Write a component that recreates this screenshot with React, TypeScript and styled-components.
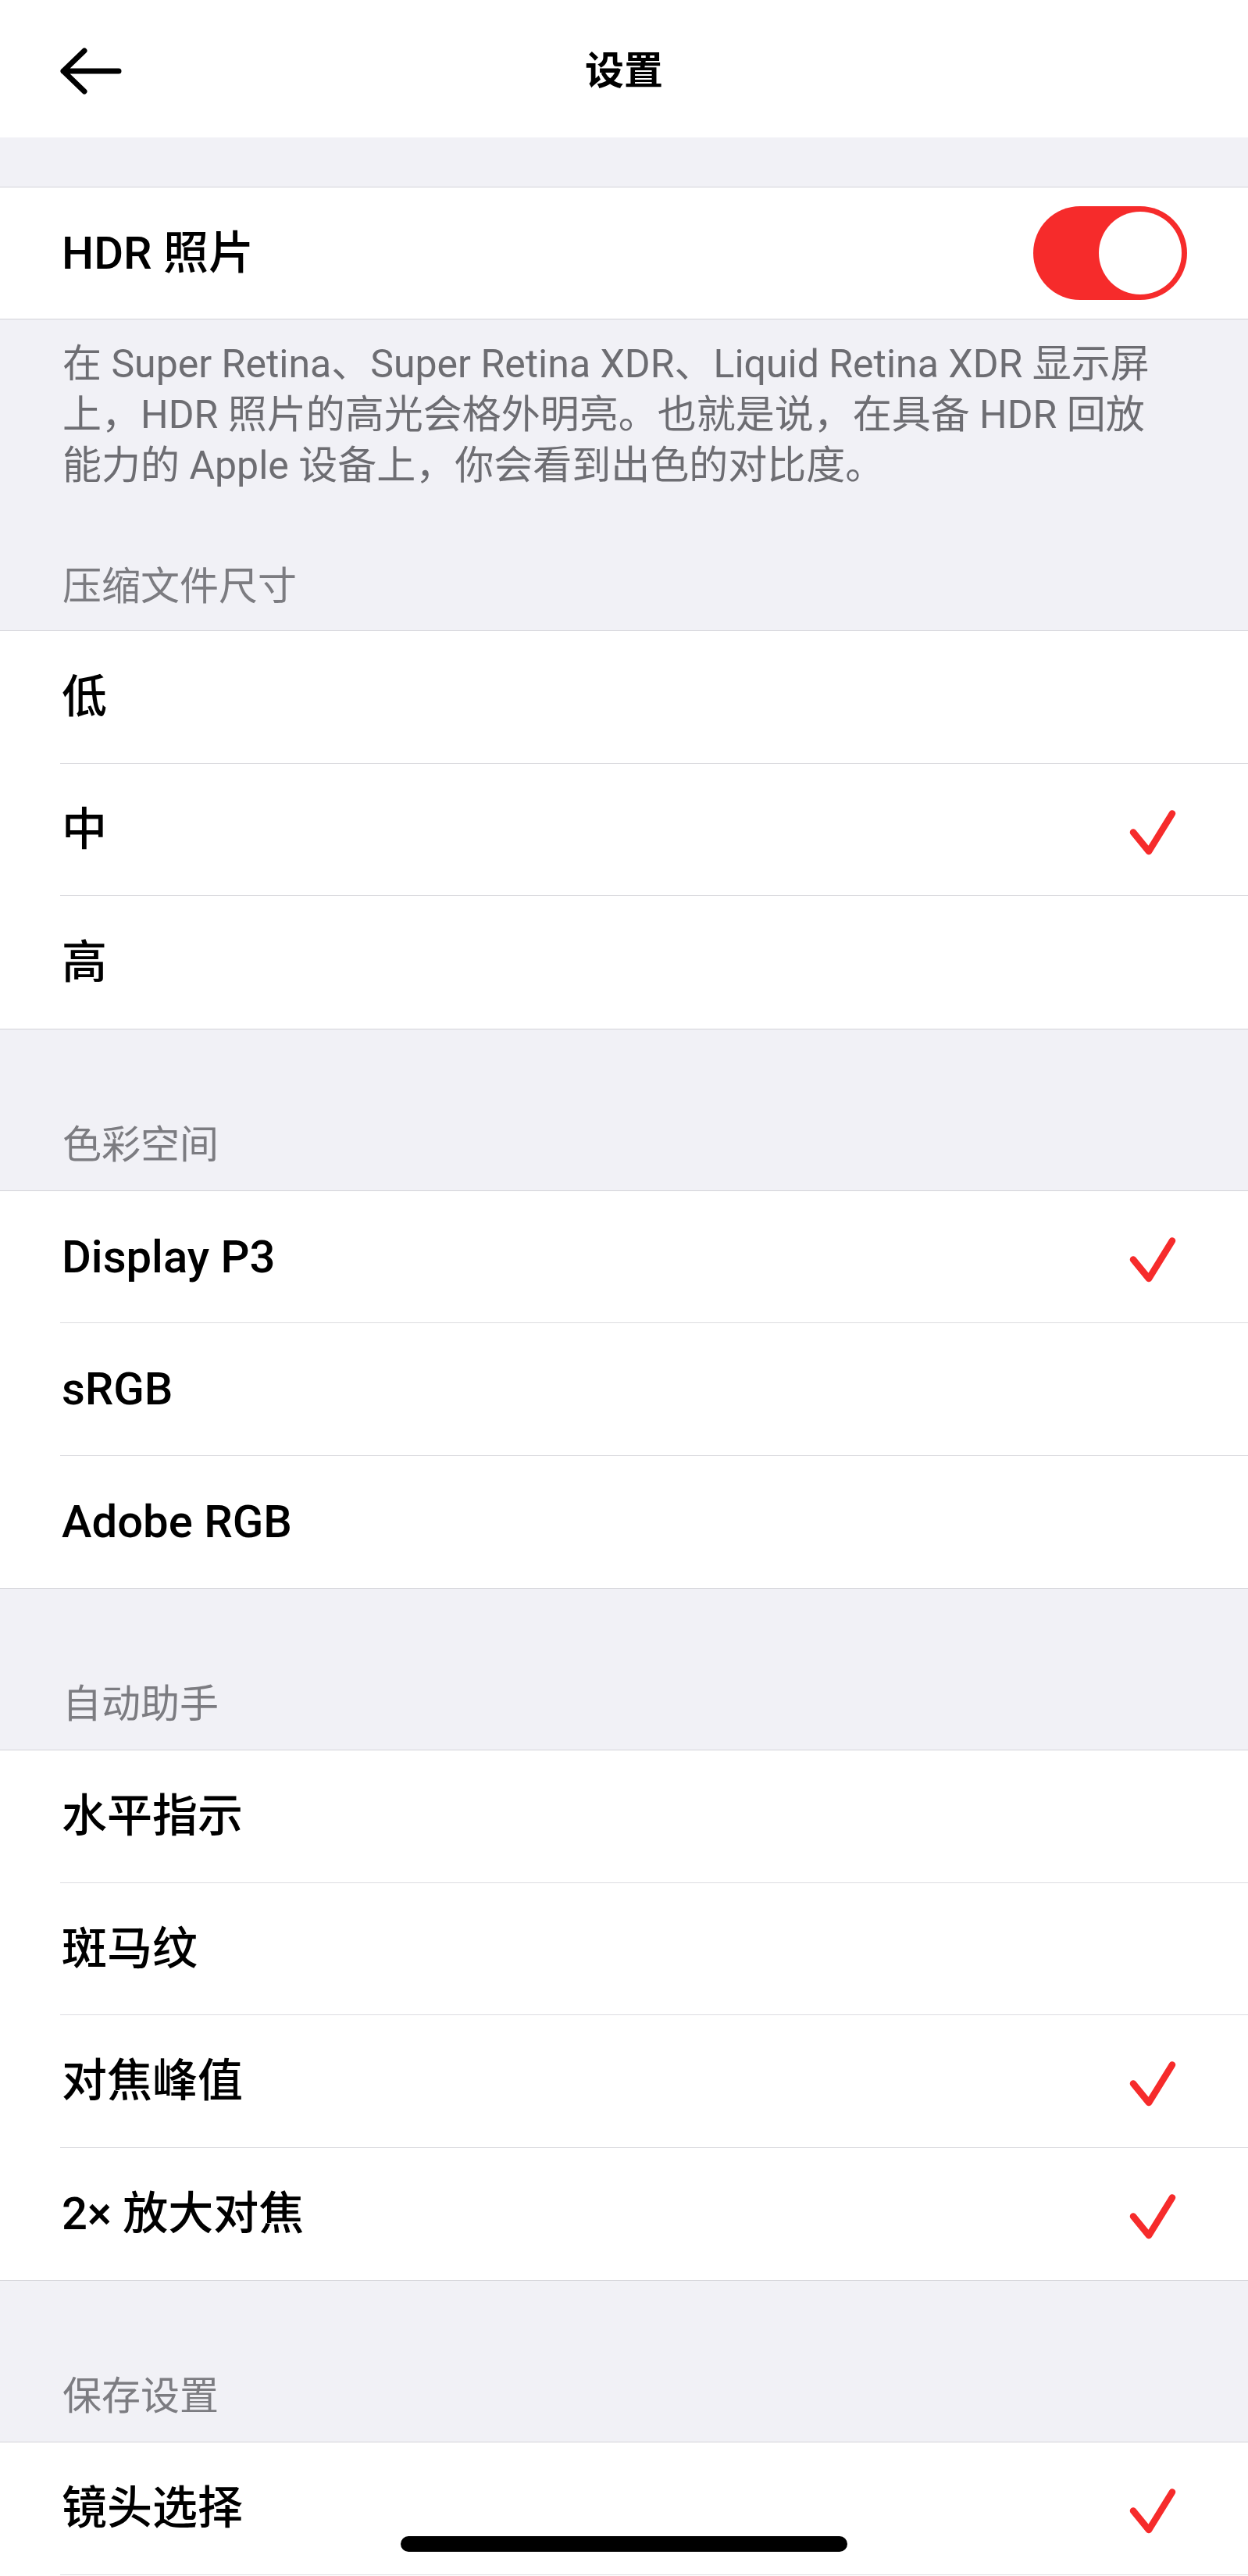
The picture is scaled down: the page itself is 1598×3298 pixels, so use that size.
import React from "react";
import styled, { createGlobalStyle } from "styled-components";

const GlobalStyle = createGlobalStyle`
  html, body {
    margin: 0;
    padding: 0;
    background: #ffffff;
  }
  body {
    font-family: Roboto, "Noto Sans CJK SC", "Noto Sans", sans-serif;
    color: #000;
    -webkit-font-smoothing: antialiased;
  }
  * { box-sizing: border-box; }
`;

const RED = "#f62b2b";
const GRAY_BG = "#f1f1f6";
const EDGE = "#d3d3d8";
const SEP = "#dcdce0";

const Page = styled.div`
  width: 1598px;
  display: flex;
  flex-direction: column;
  background: #fff;
`;

const NavBar = styled.header`
  height: 176px;
  padding: 6px 0 0 0;
  display: grid;
  grid-template-columns: 1fr auto 1fr;
  align-items: center;
  background: #fff;
`;

const BackButton = styled.button`
  justify-self: start;
  margin-left: 76px;
  padding: 0;
  border: none;
  background: transparent;
  display: flex;
  align-items: center;
  cursor: pointer;
`;

const Title = styled.h1`
  margin: 0;
  font-size: 50px;
  line-height: 60px;
  font-weight: 600;
  color: #000;
`;

const Spacer = styled.div<{ $h: number }>`
  height: ${(p) => p.$h}px;
  background: ${GRAY_BG};
`;

const Group = styled.section`
  background: #fff;
  border-top: 1px solid ${EDGE};
  border-bottom: 1px solid ${EDGE};
`;

const Row = styled.div`
  padding-left: 77px;
  &:last-child > div {
    border-bottom: none;
  }
`;

const RowInner = styled.div<{ $h?: number }>`
  height: ${(p) => p.$h ?? 169.5}px;
  padding: 0 78px 0 2px;
  display: flex;
  align-items: center;
  justify-content: space-between;
  border-bottom: 1px solid ${SEP};
`;

const Label = styled.span`
  font-size: 58px;
  line-height: 70px;
  font-weight: 500;
  color: #000;
  white-space: nowrap;
`;

const Track = styled.div<{ $on: boolean }>`
  width: 197px;
  height: 120px;
  border-radius: 60px;
  padding: 7px;
  display: flex;
  justify-content: ${(p) => (p.$on ? "flex-end" : "flex-start")};
  background: ${(p) => (p.$on ? RED : "#e5e5ea")};
`;

const Knob = styled.div`
  width: 106px;
  height: 106px;
  border-radius: 50%;
  background: #fff;
`;

const CheckSvg = styled.svg`
  margin-right: 14px;
  margin-top: 4px;
  flex: none;
`;

const Footer = styled.div`
  background: ${GRAY_BG};
  padding: 25px 78px 0 80px;
  font-size: 50px;
  line-height: 65px;
  color: #6d6d72;
`;

const FooterLine = styled.div`
  white-space: nowrap;
`;

const SectionHeader = styled.div<{ $top?: number; $bottom?: number }>`
  background: ${GRAY_BG};
  padding: ${(p) => p.$top ?? 116}px 78px ${(p) => p.$bottom ?? 25}px 80px;
  font-size: 50px;
  line-height: 65px;
  color: #7c7c81;
`;

const HomeIndicator = styled.div`
  position: fixed;
  left: 50%;
  bottom: 31px;
  transform: translateX(-50%);
  width: 572px;
  height: 20px;
  border-radius: 10px;
  background: #000;
`;

const BackArrow = () => (
  <svg width="80" height="60" viewBox="0 0 80 60" fill="none">
    <path
      d="M76 30 H5 M32 4 L5 30 L32 56"
      stroke="#000"
      strokeWidth="7"
      strokeLinecap="round"
      strokeLinejoin="round"
    />
  </svg>
);

const Check = () => (
  <CheckSvg width="62" height="64" viewBox="0 0 62 64" fill="none">
    <path
      d="M7 33.5 L27 58 L57 9.5"
      stroke={RED}
      strokeWidth="8.5"
      strokeLinecap="round"
      strokeLinejoin="round"
    />
  </CheckSvg>
);

type Item = { label: string; checked?: boolean };

const OptionGroup = ({ items }: { items: Item[] }) => (
  <Group>
    {items.map((it) => (
      <Row key={it.label}>
        <RowInner>
          <Label>{it.label}</Label>
          {it.checked ? <Check /> : null}
        </RowInner>
      </Row>
    ))}
  </Group>
);

export default function App() {
  return (
    <>
      <GlobalStyle />
      <Page>
        <NavBar>
          <BackButton aria-label="返回">
            <BackArrow />
          </BackButton>
          <Title>设置</Title>
          <span />
        </NavBar>
        <Spacer $h={63} />
        <Group>
          <Row>
            <RowInner $h={168}>
              <Label>HDR 照片</Label>
              <Track $on>
                <Knob />
              </Track>
            </RowInner>
          </Row>
        </Group>
        <Footer>
          <FooterLine>在 Super Retina、Super Retina XDR、Liquid Retina XDR 显示屏</FooterLine>
          <FooterLine>上，HDR 照片的高光会格外明亮。也就是说，在具备 HDR 回放</FooterLine>
          <FooterLine>能力的 Apple 设备上，你会看到出色的对比度。</FooterLine>
        </Footer>
        <SectionHeader $top={90} $bottom={23}>压缩文件尺寸</SectionHeader>
        <OptionGroup
          items={[
            { label: "低" },
            { label: "中", checked: true },
            { label: "高" },
          ]}
        />
        <SectionHeader>色彩空间</SectionHeader>
        <OptionGroup
          items={[
            { label: "Display P3", checked: true },
            { label: "sRGB" },
            { label: "Adobe RGB" },
          ]}
        />
        <SectionHeader>自动助手</SectionHeader>
        <OptionGroup
          items={[
            { label: "水平指示" },
            { label: "斑马纹" },
            { label: "对焦峰值", checked: true },
            { label: "2× 放大对焦", checked: true },
          ]}
        />
        <SectionHeader>保存设置</SectionHeader>
        <Group>
          <Row>
            <RowInner>
              <Label>镜头选择</Label>
              <Check />
            </RowInner>
          </Row>
          <Row>
            <RowInner $h={4} />
          </Row>
        </Group>
      </Page>
      <HomeIndicator />
    </>
  );
}
